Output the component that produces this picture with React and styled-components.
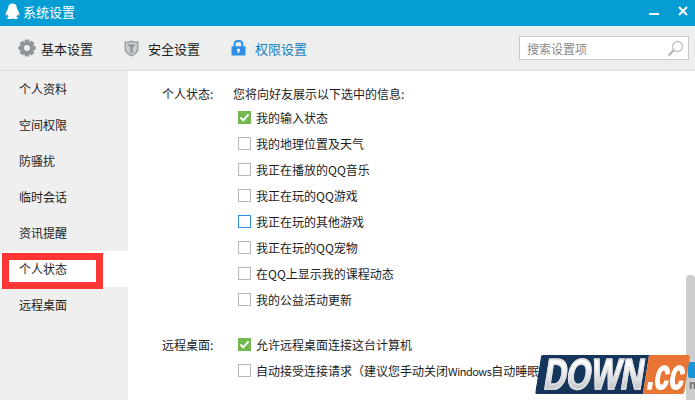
import React from "react";
import styled, { createGlobalStyle } from "styled-components";

const GlobalStyle = createGlobalStyle`
  html, body {
    margin: 0;
    padding: 0;
    background: #fff;
  }
  * {
    box-sizing: border-box;
  }
`;

const sideItems = ["个人资料", "空间权限", "防骚扰", "临时会话", "资讯提醒", "个人状态", "远程桌面"];

const statusItems = [
  { label: "我的输入状态", state: "checked" },
  { label: "我的地理位置及天气" },
  { label: "我正在播放的QQ音乐" },
  { label: "我正在玩的QQ游戏" },
  { label: "我正在玩的其他游戏", state: "hover" },
  { label: "我正在玩的QQ宠物" },
  { label: "在QQ上显示我的课程动态" },
  { label: "我的公益活动更新" },
];

function Penguin() {
  return (
    <svg width="15" height="17" viewBox="0 0 15 17">
      <path
        d="M7.5 0.5C4.6 0.5 3.2 2.6 3.1 5C3 6 2.6 6.6 2 7.6C1 9.2 0.4 11 0.8 12.2C1.1 12.9 1.9 12 2.4 11.2C2.6 12.2 3 13 3.7 13.7C2.8 14 2 14.5 2.2 15.2C2.5 16.2 5.6 16.2 7.5 15.4C9.4 16.2 12.5 16.2 12.8 15.2C13 14.5 12.2 14 11.3 13.7C12 13 12.4 12.2 12.6 11.2C13.1 12 13.9 12.9 14.2 12.2C14.6 11 14 9.2 13 7.6C12.4 6.6 12 6 11.9 5C11.8 2.6 10.4 0.5 7.5 0.5Z"
        fill="#fff"
      />
    </svg>
  );
}

function Gear() {
  const teeth = [0, 45, 90, 135];
  return (
    <svg width="18" height="18" viewBox="0 0 18 18">
      {teeth.map((a) => (
        <rect key={a} x="6.7" y="0.5" width="4.6" height="17" rx="0.8" fill="#8f9499" transform={`rotate(${a} 9 9)`} />
      ))}
      <circle cx="9" cy="9" r="6.3" fill="#8f9499" />
      <circle cx="9" cy="9" r="3" fill="#edeeee" />
    </svg>
  );
}

function Shield() {
  return (
    <svg width="15" height="17" viewBox="0 0 15 17">
      <path d="M0.5 1.2C3 1.8 5.2 1.4 7.5 0.4C9.8 1.4 12 1.8 14.5 1.2V8.5C14.5 12.4 11 15 7.5 16.6C4 15 0.5 12.4 0.5 8.5Z" fill="#9a9fa3" />
      <path d="M2 2.8C3.8 3 5.8 2.7 7.5 2C9.2 2.7 11.2 3 13 2.8V8.4C13 11.4 10.2 13.6 7.5 15C4.8 13.6 2 11.4 2 8.4Z" fill="#c9cccd" />
      <path d="M3.6 4.6H11.4L8.6 7.6V13H6.4V7.6Z" fill="#8d9296" />
    </svg>
  );
}

function Lock() {
  return (
    <svg width="15" height="16" viewBox="0 0 15 16">
      <path d="M3.6 7V4.4C3.6 2.3 5.2 1 7.5 1S11.4 2.3 11.4 4.4V7" fill="none" stroke="#2f8fe6" strokeWidth="2" />
      <rect x="0.5" y="6.2" width="14" height="9.3" rx="1" fill="#2f8fe6" />
      <circle cx="7.5" cy="10" r="1.5" fill="#fff" />
      <rect x="6.8" y="10" width="1.4" height="3" fill="#fff" />
    </svg>
  );
}

function Magnifier() {
  return (
    <svg width="17" height="17" viewBox="0 0 17 17">
      <circle cx="10.5" cy="6.5" r="5" fill="none" stroke="#c2c4c5" strokeWidth="1.4" />
      <path d="M6.8 10.2L1.5 15.5" stroke="#b5b7b8" strokeWidth="2.2" />
    </svg>
  );
}

const Window = styled.div`
  position: relative;
  width: 695px;
  height: 400px;
  overflow: hidden;
  display: flex;
  flex-direction: column;
  background: #fff;
  font-family: "Noto Sans CJK SC", "Liberation Sans", sans-serif;
  font-size: 12px;
  color: #1c1c1c;
  text-spacing-trim: space-all;
`;

const TitleBar = styled.div`
  height: 26px;
  flex: none;
  display: flex;
  align-items: center;
  gap: 5px;
  padding: 0 0 4px 5px;
  background: #069dd5;
  color: #fff;
  font-size: 13px;
`;

const Title = styled.span`
  margin-left: -2px;
  flex: 1;
`;

const WinButton = styled.button`
  width: 24px;
  height: 22px;
  padding: 0;
  border: 0;
  background: none;
  display: flex;
  align-items: center;
  justify-content: center;
`;

const Toolbar = styled.div`
  height: 45px;
  flex: none;
  display: flex;
  align-items: center;
  padding: 0 6px 0 18px;
  background: #edeeee;
  border-bottom: 1px solid #d9dadb;
`;

const Tab = styled.div`
  display: flex;
  align-items: center;
  gap: ${(p) => (p.$gap ? p.$gap : 6)}px;
  margin-right: 31px;
  font-size: 13px;
  color: ${(p) => (p.$active ? "#1a7fc0" : "#1c1c1c")};
`;

const Search = styled.div`
  margin-left: auto;
  width: 170px;
  height: 24px;
  display: flex;
  align-items: center;
  justify-content: space-between;
  padding: 0 4px 0 7px;
  background: #fff;
  border: 1px solid #c6c7c8;
  color: #8a8a8a;
`;

const Body = styled.div`
  flex: 1;
  display: flex;
  min-height: 0;
`;

const Sidebar = styled.div`
  width: 128px;
  flex: none;
  background: #efefef;
`;

const SideItem = styled.div`
  height: 36px;
  padding-left: 19px;
  line-height: 36px;
  background: ${(p) => (p.$active ? "#fff" : "transparent")};
`;

const Content = styled.div`
  flex: 1;
  padding: 12px 0 0 34px;
`;

const Section = styled.div`
  display: flex;
  margin-bottom: ${(p) => p.$gap || 0}px;
`;

const SectionLabel = styled.div`
  width: 71px;
  flex: none;
  padding-top: ${(p) => p.$top || 0}px;
  line-height: 21px;
`;

const Options = styled.div`
  display: flex;
  flex-direction: column;
`;

const Intro = styled.div`
  height: 21px;
  line-height: 21px;
`;

const Row = styled.div`
  height: 26px;
  display: flex;
  align-items: center;
  gap: 5px;
  margin-left: 5px;
  white-space: nowrap;
`;

const RowText = styled.span`
  white-space: pre;
`;

const Latin = styled.span`
  font-size: 11px;
  letter-spacing: -0.5px;
`;

const Box = styled.span`
  width: 13px;
  height: 13px;
  flex: none;
  display: flex;
  align-items: center;
  justify-content: center;
  background: ${(p) => (p.$state === "checked" ? "#72b84f" : "#fff")};
  border: 1px solid
    ${(p) => (p.$state === "checked" ? "#72b84f" : p.$state === "hover" ? "#2f8fe6" : "#b9b9b9")};
`;

function Check({ children, state }) {
  return (
    <Row>
      <Box $state={state}>
        {state === "checked" && (
          <svg width="11" height="11" viewBox="0 0 11 11">
            <path d="M1.5 5.5L4.3 8.3L9.6 2.4" fill="none" stroke="#fff" strokeWidth="2" />
          </svg>
        )}
      </Box>
      <RowText>{children}</RowText>
    </Row>
  );
}

const Scrollbar = styled.div`
  position: absolute;
  top: 275px;
  right: 0;
  width: 9px;
  height: 125px;
  background: #cdcdcd;
  border-radius: 4px 4px 0 0;
`;

const Annotation = styled.div`
  position: absolute;
  left: 2px;
  top: 253px;
  width: 101px;
  height: 36px;
  border: 7px solid #ff3636;
`;

const Watermark = styled.div`
  position: absolute;
  left: 538px;
  top: 355px;
  width: 149px;
  height: 39px;
  display: flex;
  transform: skewX(-9deg);
  font-family: "Liberation Sans", Arial, sans-serif;
  font-weight: 700;
  font-size: 43px;
  line-height: 39px;
  border-radius: 2px;
  overflow: hidden;
`;

const MarkDown = styled.div`
  width: 108px;
  padding-left: 7px;
  background: #16355a;
`;

const MarkCc = styled.div`
  flex: 1;
  padding-left: 2px;
  background: #e87533;
`;

const MarkShaded = styled.span`
  display: inline-block;
  transform-origin: left center;
  transform: scaleX(0.73);
  color: transparent;
  -webkit-text-stroke: 1.6px #dfe0e3;
  background: linear-gradient(#ffffff 25%, #c4c6c9 85%);
  -webkit-background-clip: text;
  background-clip: text;
`;

const MarkWhite = styled.span`
  display: inline-block;
  transform-origin: left center;
  transform: scaleX(0.62);
  color: #fff;
  -webkit-text-stroke: 1.4px #fff;
`;

const MarkTile = styled.div`
  position: absolute;
  left: 688px;
  top: 362px;
  width: 7px;
  height: 16px;
  background: #1a95dc;
  border-radius: 2px 0 0 2px;
`;

const MarkSuffix = styled.span`
  position: absolute;
  left: 689px;
  top: 378px;
  font-family: "Liberation Sans", Arial, sans-serif;
  font-weight: 700;
  font-size: 12px;
  line-height: 14px;
  color: #6f6f6f;
`;

export default function App() {
  return (
    <Window>
      <GlobalStyle />
      <TitleBar>
        <Penguin />
        <Title>系统设置</Title>
        <WinButton>
          <svg width="10" height="10" viewBox="0 0 10 10">
            <rect x="0" y="7" width="10" height="2" fill="#fff" />
          </svg>
        </WinButton>
        <WinButton>
          <svg width="10" height="10" viewBox="0 0 10 10">
            <path d="M1 1L9 9M9 1L1 9" stroke="#fff" strokeWidth="2" />
          </svg>
        </WinButton>
      </TitleBar>
      <Toolbar>
        <Tab $gap={5}>
          <Gear />
          基本设置
        </Tab>
        <Tab $gap={9}>
          <Shield />
          安全设置
        </Tab>
        <Tab $gap={9} $active>
          <Lock />
          权限设置
        </Tab>
        <Search>
          搜索设置项
          <Magnifier />
        </Search>
      </Toolbar>
      <Body>
        <Sidebar>
          {sideItems.map((item) => (
            <SideItem key={item} $active={item === "个人状态"}>
              {item}
            </SideItem>
          ))}
        </Sidebar>
        <Content>
          <Section $gap={19}>
            <SectionLabel>个人状态:</SectionLabel>
            <Options>
              <Intro>您将向好友展示以下选中的信息:</Intro>
              {statusItems.map((item) => (
                <Check key={item.label} state={item.state}>
                  {item.label}
                </Check>
              ))}
            </Options>
          </Section>
          <Section>
            <SectionLabel $top={3}>远程桌面:</SectionLabel>
            <Options>
              <Check state="checked">允许远程桌面连接这台计算机</Check>
              <Check>
                自动接受连接请求（建议您手动关闭<Latin>Windows</Latin>自动睡眠
              </Check>
            </Options>
          </Section>
        </Content>
      </Body>
      <Scrollbar />
      <Annotation />
      <MarkTile />
      <MarkSuffix>m</MarkSuffix>
      <Watermark>
        <MarkDown>
          <MarkShaded>DOWN</MarkShaded>
        </MarkDown>
        <MarkCc>
          <MarkWhite>.cc</MarkWhite>
        </MarkCc>
      </Watermark>
    </Window>
  );
}
